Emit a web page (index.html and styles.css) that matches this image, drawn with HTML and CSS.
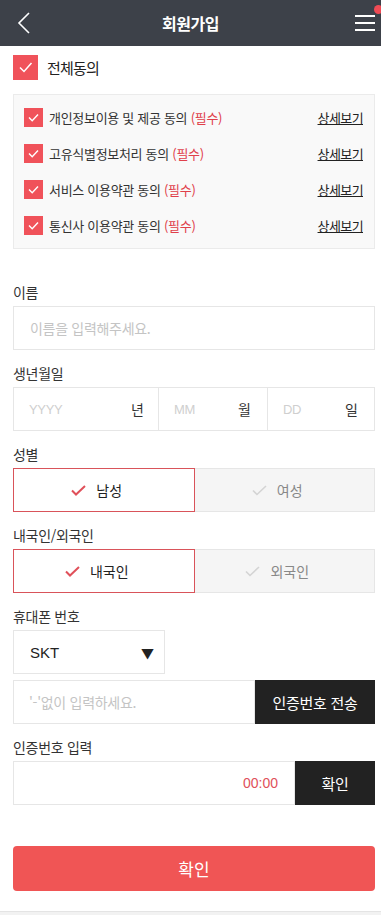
FILE: index.html
```html
<!DOCTYPE html>
<html lang="ko">
<head>
<meta charset="utf-8">
<title>회원가입</title>
<link rel="stylesheet" href="styles.css">
</head>
<body>
<header class="topbar">
  <a class="back" href="#" aria-label="뒤로">
    <svg width="14" height="22" viewBox="0 0 14 22"><polyline points="12,1 2,11 12,21" fill="none" stroke="#fff" stroke-width="1.6"/></svg>
  </a>
  <h1 class="title">회원가입</h1>
  <a class="menu" href="#" aria-label="메뉴">
    <span class="bar"></span><span class="bar"></span><span class="bar"></span>
    <span class="dot"></span>
  </a>
</header>

<main class="content">
  <label class="all-agree">
    <span class="cb cb-lg"><svg viewBox="0 0 25 25"><polyline points="7,12.5 11,16.5 18.5,8" fill="none" stroke="#fff" stroke-width="1.5"/></svg></span>
    <span class="all-text">전체동의</span>
  </label>

  <div class="terms">
    <div class="term-row">
      <span class="cb"><svg viewBox="0 0 19 19"><polyline points="5,9.5 8.2,12.7 14,6.5" fill="none" stroke="#fff" stroke-width="1.4"/></svg></span>
      <span class="term-text">개인정보이용 및 제공 동의 <em class="req">(필수)</em></span>
      <a class="more" href="#">상세보기</a>
    </div>
    <div class="term-row">
      <span class="cb"><svg viewBox="0 0 19 19"><polyline points="5,9.5 8.2,12.7 14,6.5" fill="none" stroke="#fff" stroke-width="1.4"/></svg></span>
      <span class="term-text">고유식별정보처리 동의 <em class="req">(필수)</em></span>
      <a class="more" href="#">상세보기</a>
    </div>
    <div class="term-row">
      <span class="cb"><svg viewBox="0 0 19 19"><polyline points="5,9.5 8.2,12.7 14,6.5" fill="none" stroke="#fff" stroke-width="1.4"/></svg></span>
      <span class="term-text">서비스 이용약관 동의 <em class="req">(필수)</em></span>
      <a class="more" href="#">상세보기</a>
    </div>
    <div class="term-row">
      <span class="cb"><svg viewBox="0 0 19 19"><polyline points="5,9.5 8.2,12.7 14,6.5" fill="none" stroke="#fff" stroke-width="1.4"/></svg></span>
      <span class="term-text">통신사 이용약관 동의 <em class="req">(필수)</em></span>
      <a class="more" href="#">상세보기</a>
    </div>
  </div>

  <div class="fields">
    <div class="field">
      <div class="label">이름</div>
      <div class="box"><span class="ph">이름을 입력해주세요.</span></div>
    </div>

    <div class="field">
      <div class="label">생년월일</div>
      <div class="box birth">
        <div class="bcell"><span class="ph en">YYYY</span><span class="unit">년</span></div>
        <div class="bcell"><span class="ph en">MM</span><span class="unit">월</span></div>
        <div class="bcell"><span class="ph en">DD</span><span class="unit">일</span></div>
      </div>
    </div>

    <div class="field">
      <div class="label">성별</div>
      <div class="toggle">
        <div class="opt on"><svg class="ck" width="15" height="11" viewBox="0 0 15 11"><polyline points="1,5.5 5,9.5 14,1" fill="none" stroke="#e0505a" stroke-width="2"/></svg>남성</div>
        <div class="opt"><svg class="ck" width="15" height="11" viewBox="0 0 15 11"><polyline points="1,5.5 5,9.5 14,1" fill="none" stroke="#d4d4d4" stroke-width="1.6"/></svg>여성</div>
      </div>
    </div>

    <div class="field">
      <div class="label">내국인/외국인</div>
      <div class="toggle">
        <div class="opt on"><svg class="ck" width="15" height="11" viewBox="0 0 15 11"><polyline points="1,5.5 5,9.5 14,1" fill="none" stroke="#e0505a" stroke-width="2"/></svg>내국인</div>
        <div class="opt"><svg class="ck" width="15" height="11" viewBox="0 0 15 11"><polyline points="1,5.5 5,9.5 14,1" fill="none" stroke="#d4d4d4" stroke-width="1.6"/></svg>외국인</div>
      </div>
    </div>

    <div class="field">
      <div class="label">휴대폰 번호</div>
      <div class="box select"><span class="sel-val">SKT</span><span class="caret">▼</span></div>
      <div class="combo">
        <div class="box grow"><span class="ph">'-'없이 입력하세요.</span></div>
        <button class="dark-btn send">인증번호 전송</button>
      </div>
    </div>

    <div class="field">
      <div class="label">인증번호 입력</div>
      <div class="combo">
        <div class="box grow timer-box"><span class="timer">00:00</span></div>
        <button class="dark-btn ok">확인</button>
      </div>
    </div>
  </div>

  <button class="submit">확인</button>
</main>
<div class="footer-band"></div>
</body>
</html>
```

FILE: styles.css
```css
* { box-sizing: border-box; }
html, body { margin: 0; padding: 0; }
body {
  width: 381px;
  background: #fff;
  font-family: "Noto Sans CJK KR", "Noto Sans", sans-serif;
  color: #333;
}

.topbar {
  height: 46px;
  background: #3d4149;
  display: flex;
  align-items: center;
  justify-content: space-between;
  padding: 0 6px 0 17px;
  position: relative;
}
.back { display: flex; width: 14px; height: 22px; }
.title {
  margin: 0;
  font-size: 16px;
  font-weight: 700;
  color: #fff;
  letter-spacing: -0.5px;
  position: absolute;
  left: 0; right: 0;
  text-align: center;
  line-height: 46px;
  pointer-events: none;
}
.menu {
  width: 20px;
  height: 16px;
  display: flex;
  flex-direction: column;
  justify-content: space-between;
  position: relative;
  margin-right: 0;
}
.bar { display: block; height: 2px; background: #fff; }
.dot {
  position: absolute;
  width: 9px; height: 9px;
  border-radius: 50%;
  background: #f04b55;
  right: -8px;
  top: -10px;
}

.content { padding: 9px 6px 0 13px; }

.all-agree { display: flex; align-items: center; height: 25px; gap: 9px; }
.cb {
  width: 19px; height: 19px;
  background: #f0525a;
  display: inline-flex;
  flex: none;
}
.cb svg { width: 100%; height: 100%; }
.cb-lg { width: 25px; height: 25px; }
.all-text { font-size: 15px; color: #222; letter-spacing: -0.8px; }

.terms {
  margin-top: 14px;
  border: 1px solid #ebebeb;
  background: #f9f9f9;
  padding: 4px 11px 5px 10px;
}
.term-row {
  height: 36px;
  display: flex;
  align-items: center;
}
.term-row .cb { margin-right: 6px; }
.term-text { font-size: 13px; color: #333; letter-spacing: -0.3px; flex: 1; }
.req { font-style: normal; color: #e0404a; }
.more { font-size: 13px; color: #222; text-decoration: underline; letter-spacing: -0.6px; }

.fields { margin-top: 33px; display: flex; flex-direction: column; gap: 13px; }
.field { display: flex; flex-direction: column; gap: 4px; }
.label { font-size: 14px; line-height: 20px; color: #333; letter-spacing: -0.3px; }
.box {
  height: 44px;
  border: 1px solid #e6e6e6;
  display: flex;
  align-items: center;
  padding: 0 16px;
  background: #fff;
}
.ph { font-size: 14px; color: #c4c4c4; letter-spacing: -0.3px; }
.ph.en { font-family: "Liberation Sans", sans-serif; font-size: 13px; color: #cfcfcf; }

.birth { padding: 0; }
.bcell {
  height: 100%;
  display: flex;
  align-items: center;
  justify-content: space-between;
  padding: 0 14px 0 15px;
}
.bcell:nth-child(1) { width: 144px; padding-left: 15px; }
.bcell:nth-child(2) { width: 109px; border-left: 1px solid #e6e6e6; padding-right: 16px; }
.bcell:nth-child(3) { flex: 1; border-left: 1px solid #e6e6e6; padding-right: 16px; }
.unit { font-size: 14px; color: #333; }

.toggle { display: flex; height: 44px; }
.opt {
  flex: 1;
  display: flex;
  align-items: center;
  justify-content: center;
  gap: 10px;
  font-size: 14px;
  color: #888;
  background: #f5f5f5;
  border: 1px solid #e6e6e6;
  border-left: none;
}
.opt.on {
  background: #fff;
  border: 1px solid #d9535a;
  color: #222;
}
.opt .ck { margin-left: -14px; }

.select {
  width: 152px;
  justify-content: space-between;
  padding: 0 10px 0 16px;
}
.sel-val { font-family: "Liberation Sans", sans-serif; font-size: 15px; color: #222; }
.caret { font-size: 13px; color: #222; }

.combo { display: flex; height: 44px; margin-top: 2px; }
.field:last-child .combo { margin-top: 0; }
.grow { flex: 1; padding-left: 15px; }
.dark-btn {
  border: none;
  background: #222;
  color: #fff;
  font-family: "Noto Sans CJK KR", sans-serif;
  font-size: 15px;
  height: 44px;
  padding: 0;
  letter-spacing: -0.3px;
}
.send { width: 120px; }
.ok { width: 80px; }
.timer-box { justify-content: flex-end; padding-right: 16px; }
.timer { font-family: "Liberation Sans", sans-serif; font-size: 14px; color: #e0505a; }

.submit {
  display: block;
  width: 362px;
  height: 45px;
  margin-top: 41px;
  border: none;
  border-radius: 4px;
  background: #f05555;
  color: #fff;
  font-family: "Noto Sans CJK KR", sans-serif;
  font-size: 17px;
}

.footer-band {
  margin-top: 20px;
  height: 10px;
  background: #f2f2f2;
  border-top: 1px solid #e4e4e4;
}
```
